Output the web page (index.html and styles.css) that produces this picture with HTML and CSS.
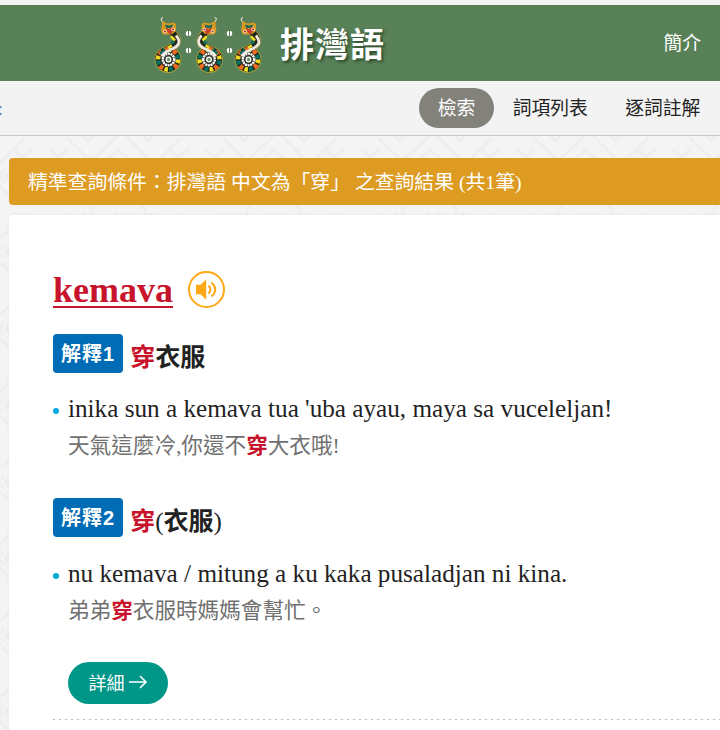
FILE: index.html
```
<!DOCTYPE html>
<html lang="zh-Hant">
<head>
<meta charset="utf-8">
<title>排灣語</title>
<link rel="stylesheet" href="styles.css">
</head>
<body>
<svg class="defs" width="0" height="0">
  <defs>
    <pattern id="weave" x="40" y="0" width="155.700" height="76.500" patternUnits="userSpaceOnUse">
      <g fill="none" stroke="#eeeeee" stroke-width="3">
        <path d="M43 0l5 5 5-5M103 0l5 5 5-5M27 2l26 25M49 27L78 0M86 0l26 26M116 26L141 2M64 26l14-12 14 12M10 14l9 7 9-7M130 14l8 7 11-8"/>
        <path d="M24 13l3 3M132 13l-3 3M120 34l-6 6 6 6M127 34l-6 6 6 6M114 48l20 20M42 34l-6 6 6 6M35 34l-6 6 6 6M22 70l22-22M66 48l12-12 12 12-12 12zM50 74l14-14M106 74l-14-14M0 50l16 16M156 50l-16 16"/>
      </g>
    </pattern>
    <g id="snake">
      <circle cx="14" cy="42" r="9.300" fill="#26271f" stroke="#b5a535" stroke-width="8"/>
      <path d="M17 14C26 21 25 27 17 30C9 34 5 36 4 41" fill="none" stroke="#a99a3a" stroke-width="7.500"/>
      <path d="M17 14C26 21 25 27 17 30C9 34 5 36 4 41" fill="none" stroke="#26271f" stroke-width="6"/>
      <circle cx="14" cy="42" r="9" fill="none" stroke="#26271f" stroke-width="7"/>
      <circle cx="14" cy="42" r="10" fill="none" stroke="#f2df20" stroke-width="4.500" stroke-dasharray="3.500 12.200"/>
      <circle cx="14" cy="42" r="10" fill="none" stroke="#f06a20" stroke-width="4.500" stroke-dasharray="0 5 4 6.700"/>
      <circle cx="14" cy="42" r="10" fill="none" stroke="#087060" stroke-width="4.500" stroke-dasharray="0 10.500 4 1.200"/>
      <path d="M17 19l4 4M18 28l-4 2" stroke="#f2df20" stroke-width="2.500"/>
      <path d="M20 24l-3 2M9 34l-3 2" stroke="#087060" stroke-width="3"/>
      <path d="M14 30l-3 2" stroke="#f06a20" stroke-width="3"/>
      <path d="M22 18C28 25 24 29 17 32C13 34 9 35 8 39" fill="none" stroke="#eee9df" stroke-width="2.800"/>
      <circle cx="14.500" cy="42" r="5.800" fill="#34362b" stroke="#fff" stroke-width="2.300" stroke-dasharray="2 .6"/>
      <circle cx="14.500" cy="42" r="2.300" fill="#68905f" stroke="#fff" stroke-width="1.300"/>
      <path d="M8 8L8 3L13 6L20 5L22 7L22 13L19 16L15 17L9 17L7 13z" fill="#d99a20"/>
      <path d="M11 7l4 1 4-1-1 3-6 1z" fill="#126f5f"/>
      <path d="M12 9l3 3 3-3 1 5-3 3-3-3z" fill="#c84028"/>
      <circle cx="11" cy="14" r="1.700" fill="#fff"/><circle cx="19" cy="12" r="1.700" fill="#fff"/>
      <circle cx="11" cy="14" r="1.100" fill="#b12e28"/><circle cx="19" cy="12" r="1.100" fill="#b12e28"/>
      <path d="M8 4L7 1 9 0" stroke="#e9eee6" fill="none"/>
    </g>
  </defs>
</svg>
<svg class="backdrop" width="720" height="594"><rect width="720" height="594" fill="url(#weave)"/></svg>
<header class="site-header">
  <div class="brand">
    <svg class="totem" width="112" height="60" viewBox="0 0 112 60">
      <use href="#snake" transform="translate(1 1.500)"/>
      <use href="#snake" transform="translate(70.500 1.500) scale(-1 1)"/>
      <use href="#snake" transform="translate(81 1.500)"/>
      <g fill="#fff"><circle cx="35.500" cy="17.500" r="2.700"/><circle cx="35.500" cy="34.500" r="2.700"/><circle cx="76.500" cy="17.500" r="2.700"/><circle cx="76.500" cy="34.500" r="2.700"/></g>
      <path d="M35.500 14v24M76.500 14v24" stroke="#588157"/>
    </svg>
    <span class="brand-name">排灣語</span>
  </div>
  <a class="about">簡介</a>
</header>
<nav class="subnav">
  <span class="access-key">:</span>
  <a class="tab tab-active">檢索</a><a class="tab">詞項列表</a><a class="tab">逐詞註解</a>
</nav>
<main>
  <div class="query">精準查詢條件：排灣語 中文為「穿」 之查詢結果 (共1筆)</div>
  <article class="card">
    <div class="word">
      <a class="term">kemava</a>
      <svg class="sound" width="37" height="37" viewBox="0 0 37 37"><circle cx="18.500" cy="18.500" r="17.500" fill="none" stroke="#ffa817" stroke-width="2"/><path d="M8 13.700h4.500l5.700-5.500v20.600l-5.700-5.500H8z" fill="#ffa817"/><path d="M20.500 14.500q3.800 4 0 8M23.500 11.500q7.500 7 0 14" fill="none" stroke="#ffa817" stroke-width="2"/></svg>
    </div>
    <section class="sense">
      <h2><span class="label">解釋1</span><span class="meaning"><b>穿</b>衣服</span></h2>
      <div class="example"><p class="source">inika sun a kemava tua 'uba ayau, maya sa vuceleljan!</p><p class="translation">天氣這麼冷,你還不<b>穿</b>大衣哦!</p></div>
    </section>
    <section class="sense">
      <h2><span class="label">解釋2</span><span class="meaning"><b>穿</b><span class="paren">(</span>衣服<span class="paren">)</span></span></h2>
      <div class="example"><p class="source">nu kemava / mitung a ku kaka pusaladjan ni kina.</p><p class="translation">弟弟<b>穿</b>衣服時媽媽會幫忙。</p></div>
    </section>
    <a class="more">詳細<svg width="20" height="16" viewBox="0 0 20 16"><path d="M1 8h17M12 2l6 6-6 6" fill="none" stroke="#fff" stroke-width="1.600"/></svg></a>
    <svg class="divider" width="667" height="1"><path d="M0 .5H667" stroke="#bbb" stroke-dasharray="2 4"/></svg>
  </article>
</main>
</body>
</html>
```
FILE: styles.css
```
* { box-sizing: border-box; }
body { margin: 0; padding-top: 5px; width: 720px; height: 730px; overflow: hidden; background: #f4f4f4; color: #222; font-family: "Liberation Serif", "Noto Sans CJK TC", serif; }
.defs { position: absolute; }
.backdrop { position: absolute; left: 0; top: 136px; z-index: -1; }
.site-header { height: 76px; background: #588157; display: flex; justify-content: space-between; align-items: center; padding: 0 19px 0 153px; color: #fff; }
.brand { display: flex; align-items: center; gap: 15px; }
.totem { margin-top: 5px; }
.brand-name { font: 700 34px/50px "Noto Sans CJK TC", sans-serif; letter-spacing: 1px; text-shadow: 2px 2px 3px #2b4a2b; }
.about { font-size: 18.75px; line-height: 28px; padding-top: 2px; }
.subnav { height: 55px; background: #f3f3f3; border-bottom: 1px solid #c8c8c8; display: flex; align-items: center; }
.access-key { color: #6b8cac; width: 419px; margin-left: -2px; margin-right: 2px; padding-top: 3px; font-size: 18px; }
.tab { font-size: 18.8px; line-height: 42px; height: 40px; border-radius: 20px; padding: 0 18.7px; white-space: nowrap; }
.tab-active { background: #82827a; color: #fff; }
main { padding: 22px 0 0 9px; }
.query { height: 47px; border-radius: 4px 0 0 4px; background: #dd9b22; color: #fff; padding-left: 19px; font-size: 19.82px; line-height: 49px; }
.card { margin-top: 10px; height: 540px; background: #fff; border-radius: 4px 0 0 0; padding: 52px 0 0 44px; box-shadow: 0 0 4px #0000000d; }
.word { display: flex; align-items: center; height: 46px; gap: 15px; }
.sound { margin-bottom: 2px; }
.term { font-size: 36px; font-weight: 700; line-height: 40px; color: #c7132c; text-decoration: underline; text-decoration-thickness: 2px; text-underline-offset: 4px; }
.sense { height: 164px; }
.word + .sense { margin-top: 21px; }
h2 { margin: 0; height: 39px; display: flex; align-items: flex-start; gap: 7px; font-size: 25px; }
.label { height: 39px; padding: 0 8px; border-radius: 4px; background: #006cb5; color: #fff; font: 700 20px/41px "Liberation Sans", "Noto Sans CJK TC", sans-serif; letter-spacing: 1px; white-space: nowrap; }
.meaning { line-height: 47px; white-space: nowrap; }
.paren { font-weight: 400; }
b { color: #c7132c; font-weight: 700; }
.example { position: relative; padding: 17px 0 0 15px; }
.sense + .sense .example { padding-top: 18px; }
.example::before { content: ""; position: absolute; left: 0; top: 35px; width: 6px; height: 6px; border-radius: 50%; background: #00a9df; }
.sense + .sense .example::before { top: 36px; }
p { margin: 0; white-space: nowrap; }
.source { font-size: 25.2px; line-height: 38px; }
.translation { font-size: 21.600px; line-height: 36px; color: #707070; }
.more { margin: 0 0 0 15px; padding-bottom: 2px; width: 100px; height: 42px; border-radius: 21px; background: #009688; color: #fff; display: flex; align-items: center; justify-content: center; gap: 3px; font-size: 18px; }
.divider { display: block; margin-top: 15px; }
```
